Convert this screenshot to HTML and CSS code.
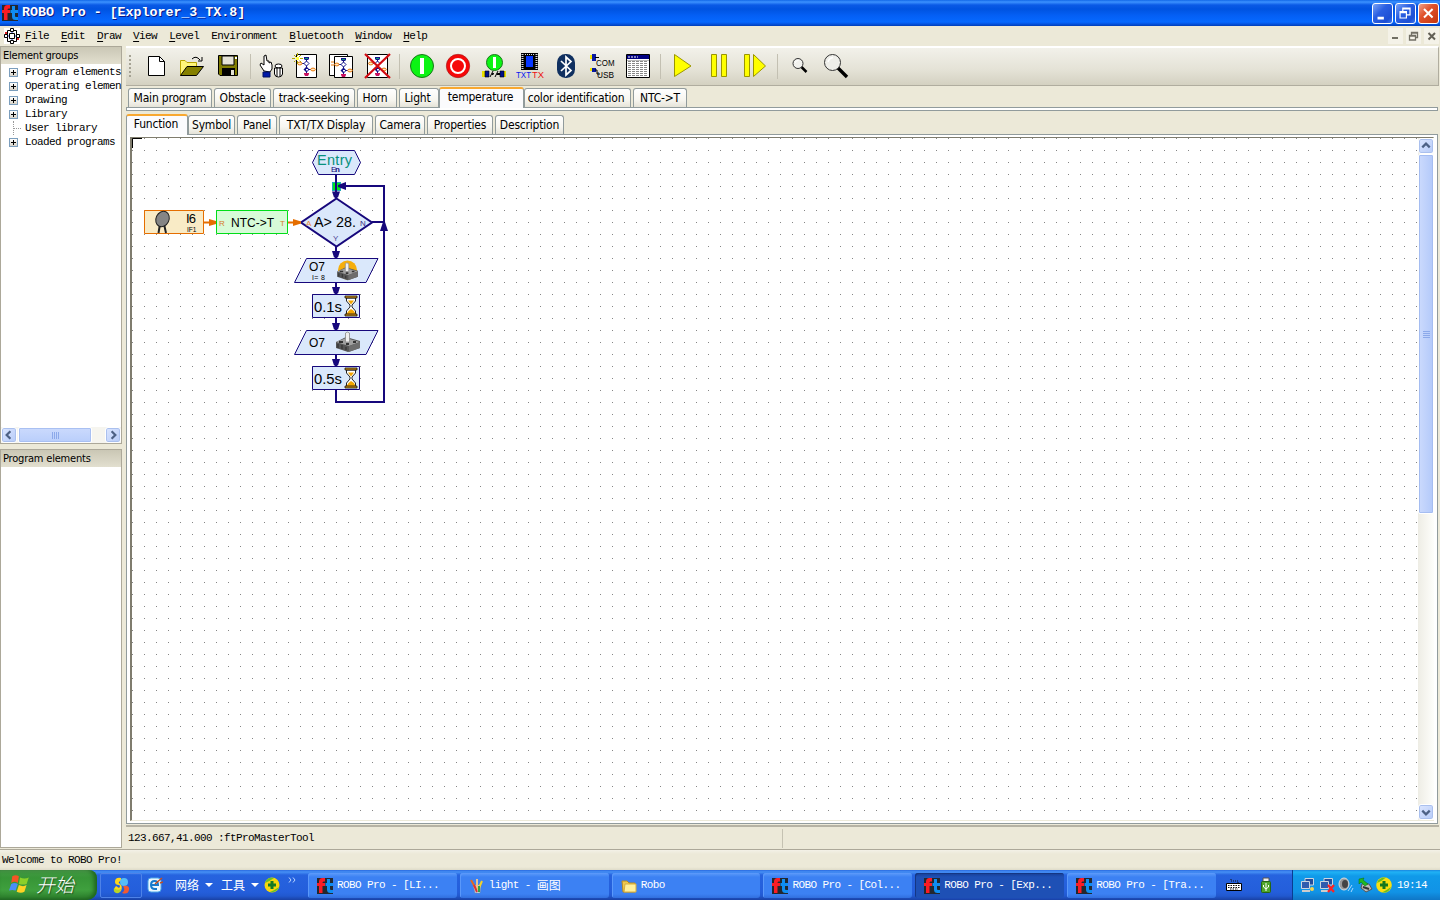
FILE: index.html
```html
<!DOCTYPE html>
<html lang="en">
<head>
<meta charset="utf-8">
<title>ROBO Pro - [Explorer_3_TX.8]</title>
<link rel="stylesheet" href="styles.css">
</head>
<body>
<svg class="defs" aria-hidden="true">
  <defs>
    <symbol id="ft" viewBox="0 0 16 16">
      <rect width="16" height="16" fill="#222830"/>
      <path d="M2 15V8H0V5H2V3.500Q2 0 5.500 0H8V3.500H6.500Q5.500 3.500 5.500 5H8V8H5.500V15Z" fill="#fb1c24"/>
      <path d="M10 1H13V5H16V8H13V11Q13 12 14 12H16V15H13.500Q10 15 10 11.500V8H8.500V5H10Z" fill="#0e8df2"/>
    </symbol>
    <symbol id="flow" viewBox="0 0 19 20">
      <path d="M9.500 2V18M4 7.500H8M11 13.500H15" stroke="#11118a" fill="none"/>
      <path d="M7 1H12V3L11 4H8L7 3Z" fill="#11118a"/><path d="M8 2H11V3H8Z" fill="#0aa070"/>
      <path d="M9.500 5L12 7.500L9.500 10L7 7.500Z" fill="#fff" stroke="#11118a"/>
      <path d="M9.500 10.500L12.500 13.500L9.500 16.500L6.500 13.500Z" fill="#11118a"/><path d="M9 13H11V14.500H9Z" fill="#fff"/>
      <ellipse cx="2.800" cy="7.500" rx="2.200" ry="1.400" fill="#ffe9c8" stroke="#e87808"/>
      <ellipse cx="16" cy="13.500" rx="2.300" ry="1.400" fill="#ffe9c8" stroke="#e87808"/>
      <path d="M7 17H12V18L11 20H8L7 18Z" fill="#c81060"/>
    </symbol>
    <symbol id="lamp" viewBox="0 0 26 22">
      <path d="M1 11L11 6L25 10V17L13 21L1 17Z" fill="#555"/>
      <path d="M1 11L11 7L25 11L14 15Z" fill="#a0a0a0"/>
      <path d="M14 15L25 11V17L14 21Z" fill="#6d6d6d"/>
      <path d="M3 13V17M7 14V18M11 16V19" stroke="#333" stroke-width="1.200"/>
      <path d="M4 10H8V12H4ZM18 10H21V12H18ZM11 12H14V14H11Z" fill="#333"/>
      <path d="M10.500 11V2Q12 0 14.500 2V11Z" fill="#eee" stroke="#888" stroke-width=".8"/>
    </symbol>
    <symbol id="glass" viewBox="0 0 14 22">
      <path d="M2.500 3V6L6 10V12L2.500 16V19H11.500V16L8 12V10L11.500 6V3Z" fill="#fff" stroke="#222"/>
      <path d="M4 5.500H10L7 9.500ZM2.500 19L4.500 16L7 14L10 16L11.500 19Z" fill="#f2a500"/>
      <path d="M1 1H13V3H1ZM1 19H13V21H1Z" fill="#d59210" stroke="#111" stroke-width=".8"/>
    </symbol>
  </defs>
</svg>

<div class="screen">
  <header class="titlebar">
    <svg class="title-icon"><use href="#ft"/></svg>
    <h1 class="title">ROBO Pro - [Explorer_3_TX.8]</h1>
    <div class="winbtns">
      <svg class="winbtn" viewBox="0 0 21 21"><path d="M5 14H12V17H5Z" fill="#fff"/></svg>
      <svg class="winbtn" viewBox="0 0 21 21"><path d="M7.500 8V4.500H15.500V12H12M7 5.500H16M4.500 8.500H11.500V15.500H4.500ZM4 9.500H12" fill="none" stroke="#fff" stroke-width="1.300"/></svg>
      <svg class="winbtn winbtn-close" viewBox="0 0 21 21"><path d="M5.500 5.500L15 15M15 5.500L5.500 15" stroke="#fff" stroke-width="2.200"/></svg>
    </div>
  </header>

  <nav class="menubar mono">
    <svg class="menu-icon" viewBox="0 0 16 16"><rect width="16" height="16" fill="#fff"/><path d="M8 3V13M3 8H13" stroke="#2030d0"/><path d="M3.500 4V2.500H12.500V13.500H3.500V4" fill="none" stroke="#000"/><path d="M6.500 .5H9.500V3.500H6.500ZM6.500 12.500H9.500V15.500H6.500ZM.5 6.500H3.500V9.500H.5ZM12.500 6.500H15.500V9.500H12.500ZM5.500 5.500H10.500V10.500H5.500Z" fill="#fff" stroke="#000"/><path d="M1 4H3V6H1ZM13 10H15V12H13Z" fill="#e02020"/></svg>
    <span><u>F</u>ile</span><span><u>E</u>dit</span><span><u>D</u>raw</span><span><u>V</u>iew</span><span><u>L</u>evel</span><span>En<u>v</u>ironment</span><span><u>B</u>luetooth</span><span><u>W</u>indow</span><span><u>H</u>elp</span>
    <div class="mdi">
      <svg viewBox="0 0 15 16"><path d="M4 9H10V11H4Z" fill="#716f64"/></svg>
      <svg viewBox="0 0 15 16"><path d="M5.500 7V4.500H11.500V9.500H9.500M5 5H12M3.500 7.500H9.500V12H3.500ZM3 8H10" fill="none" stroke="#716f64" stroke-width="1.300"/></svg>
      <svg viewBox="0 0 15 16"><path d="M4.500 5L11 11.500M11 5L4.500 11.500" stroke="#625f55" stroke-width="2"/></svg>
    </div>
  </nav>

  <div class="work">
    <aside class="side">
      <section class="panel groups">
        <h2 class="panel-head">Element groups</h2>
        <ul class="tree mono">
          <li><i class="plus"></i>Program elements</li>
          <li><i class="plus"></i>Operating elemen</li>
          <li><i class="plus"></i>Drawing</li>
          <li><i class="plus"></i>Library</li>
          <li><i class="leaf"></i>User library</li>
          <li><i class="plus"></i>Loaded programs</li>
        </ul>
        <div class="hscroll">
          <svg class="sbtn" viewBox="0 0 15 15"><path d="M9 3.500L5 7.500L9 11.500" fill="none" stroke="#4d6185" stroke-width="2.400"/></svg>
          <div class="hthumb"><i></i><i></i><i></i><i></i></div>
          <svg class="sbtn hright" viewBox="0 0 15 15"><path d="M6 3.500L10 7.500L6 11.500" fill="none" stroke="#4d6185" stroke-width="2.400"/></svg>
        </div>
      </section>
      <section class="panel elements"><h2 class="panel-head">Program elements</h2></section>
    </aside>

    <main class="main">
      <div class="toolbar">
        <div class="grip"></div>
        <svg class="tool" viewBox="138 48 36 36"><path d="M148.500 56.500H159.500L164.500 61.500V75.500H148.500Z" fill="#fff" stroke="#000"/><path d="M159.500 56.500V61.500H164.500" fill="none" stroke="#000"/></svg>
        <svg class="tool" viewBox="174 48 36 36"><path d="M180.500 75.500V60.500H185L187 62.500H196.500V67" fill="#fff67a" stroke="#b9a400"/><path d="M180.500 75.500L187 66.500H203.500L196.500 75.500Z" fill="#858000" stroke="#000"/><path d="M192 59Q196 55 200 60M202 57V61H198" fill="none" stroke="#000"/></svg>
        <svg class="tool" viewBox="210 48 36 36"><path d="M218.500 55.500H237.500V75.500H220L218.500 74Z" fill="#807c00" stroke="#000"/><path d="M222 56H234V65H222Z" fill="#e4e2d5" stroke="#000"/><path d="M222 68H235V76H222Z" fill="#000"/><path d="M231 70H234V75H231Z" fill="#e4e2d5"/><path d="M235 57H237V59H235Z" fill="#fff"/></svg>
        <i class="sep sep-first"></i>
        <svg class="tool" viewBox="251 48 36 36"><path d="M264 71L260 65L261 63L264 65V56L266 55L267 61L269 61V63L271 62L272 65V69L270 72Z" fill="#fff" stroke="#000"/><path d="M263 72H270V77H263Z" fill="#0019a8" stroke="#001060"/><ellipse cx="278.500" cy="66" rx="3.500" ry="2" fill="#fff" stroke="#000"/><path d="M274.500 68H282.500V74Q282 77 278.500 77T274.500 74ZM277 68V76M280 68V76" fill="#fff" stroke="#000"/></svg>
        <svg class="tool" viewBox="287 48 36 36"><path d="M296.500 54.500H316.500V77.500H296.500Z" fill="#fff" stroke="#000"/><use href="#flow" x="297" y="56" width="19" height="20"/><path d="M294 55L301 62M301 55L294 62M297.500 53V64M292 58.500H303" stroke="#b4a800" stroke-dasharray="3 1"/><path d="M296 57H299V60H296Z" fill="#ff4"/></svg>
        <svg class="tool" viewBox="323 48 36 36"><path d="M329.500 54.500H347.500V75.500H329.500Z" fill="#fff" stroke="#000"/><path d="M331 62H335M331 65H334" stroke="#e87808"/><path d="M334.500 56.500H352.500V77.500H334.500Z" fill="#fff" stroke="#000"/><use href="#flow" x="334" y="57" width="19" height="20"/></svg>
        <svg class="tool" viewBox="359 48 36 36"><path d="M367.500 54.500H387.500V77.500H367.500Z" fill="#fff" stroke="#000"/><use href="#flow" x="368" y="56" width="19" height="20"/><path d="M365 54L390 78M390 54L365 78" stroke="#d30b12" stroke-width="2.200"/></svg>
        <i class="sep"></i>
        <svg class="tool" viewBox="404 48 36 36"><circle cx="422" cy="66" r="11.500" fill="#0cf414" stroke="#187818"/><path d="M420 58H424V74H420Z" fill="#fff"/></svg>
        <svg class="tool" viewBox="440 48 36 36"><circle cx="458" cy="66" r="11.700" fill="#f60808" stroke="#9c1616" stroke-width=".6"/><circle cx="458" cy="66" r="7" fill="#f60808" stroke="#fff" stroke-width="2"/></svg>
        <svg class="tool" viewBox="476 48 36 36"><path d="M484 74H504" stroke="#000" stroke-width="2"/><path d="M492 70L489 77M497 70L494 77" stroke="#e4e2d6" stroke-width="3"/><path d="M490 77L493 71M495 77L498 71" stroke="#000"/><path d="M482 71H486V77H482ZM503 71H506V77H503Z" fill="#e8df00"/><path d="M485 71H489V77H485ZM500 71H504V77H500Z" fill="#00108c" stroke="#000" stroke-width=".6"/><circle cx="494.500" cy="62.500" r="8" fill="#0cf414" stroke="#187818"/><path d="M493 57H496V68H493Z" fill="#fff"/></svg>
        <svg class="tool" viewBox="512 48 36 36"><path d="M521 53H538V70H521Z" fill="#000"/><path d="M522.500 54V70M536.500 54V70" stroke="#ddd" stroke-width="2" stroke-dasharray="1 1"/><path d="M525 54.500H535" stroke="#ddd" stroke-dasharray="1 1"/><path d="M526 56H533V67H526Z" fill="#0636ff"/><text x="516" y="78" font-size="9.500" textLength="15" lengthAdjust="spacingAndGlyphs" fill="#0818ef">TXT</text><text x="532" y="78" font-size="9.500" textLength="12" lengthAdjust="spacingAndGlyphs" fill="#ed1111">TX</text></svg>
        <svg class="tool" viewBox="548 48 36 36"><rect x="557" y="54" width="18" height="24" rx="8.500" fill="#103060"/><path d="M561 61L571 70.500L566 75V57L571 61.500L561 71" fill="none" stroke="#fff" stroke-width="1.700"/></svg>
        <svg class="tool" viewBox="584 48 36 36"><path d="M590 55H593V59H590ZM590 68H593V71H590Z" fill="#f3e600"/><path d="M592 54H596V61H592ZM592 68H596V72H592Z" fill="#0818a0"/><path d="M595 57.500H599M595 70H597V74H600" fill="none" stroke="#000"/><text x="596" y="66" font-size="9.500" textLength="18.500" lengthAdjust="spacingAndGlyphs">COM</text><text x="597" y="78" font-size="9.500" textLength="17" lengthAdjust="spacingAndGlyphs">USB</text></svg>
        <svg class="tool" viewBox="620 48 36 36"><path d="M626.500 54.500H649.500V77.500H626.500Z" fill="#fff" stroke="#000"/><path d="M627 55H649V59H627Z" fill="#000080"/><path d="M628 57H638" stroke="#fff" stroke-dasharray="2 1"/><path d="M629.500 61V77M633.500 61V77M637.500 61V77M641.500 61V77M645.500 61V77" stroke="#888" stroke-width="3" stroke-dasharray="1 1"/><path d="M627 60.500H649" stroke="#bbb"/></svg>
        <i class="sep"></i>
        <svg class="tool" viewBox="665 48 36 36"><path d="M674.500 54.500L691 66L674.500 76.500Z" fill="#ff0" stroke="#9b9600"/></svg>
        <svg class="tool" viewBox="701 48 36 36"><path d="M711.500 54.500H716.500V76.500H711.500ZM721.500 54.500H726.500V76.500H721.500Z" fill="#ff0" stroke="#9b9600"/></svg>
        <svg class="tool" viewBox="737 48 36 36"><path d="M744.500 54.500H749.500V76.500H744.500ZM753.500 54.500L765.500 66L753.500 76.500Z" fill="#ff0" stroke="#9b9600"/></svg>
        <i class="sep"></i>
        <svg class="tool" viewBox="782 48 36 36"><path d="M801.500 67L806.500 72" stroke="#000" stroke-width="2.500"/><circle cx="798" cy="63.500" r="5" fill="#f2f2ee" stroke="#333"/><path d="M795 63Q795.500 60.500 798.500 60.500" fill="none" stroke="#fff"/></svg>
        <svg class="tool" viewBox="818 48 36 36"><path d="M838 68L847 77" stroke="#000" stroke-width="3.400"/><circle cx="832.500" cy="62.500" r="8" fill="#efefea" stroke="#333"/><path d="M828 62Q829 58 833 57.500" fill="none" stroke="#fff" stroke-width="1.500"/></svg>
      </div>

      <div class="tabs tabs-top">
        <span class="tab t-main">Main program</span><span class="tab t-obst">Obstacle</span><span class="tab t-track">track-seeking</span><span class="tab t-horn">Horn</span><span class="tab t-light">Light</span><span class="tab t-temp active">temperature</span><span class="tab t-color">color identification</span><span class="tab t-ntc">NTC-&gt;T</span>
      </div>
      <div class="tabline"></div>
      <div class="tabs tabs-sub">
        <span class="tab t-func active">Function</span><span class="tab t-sym">Symbol</span><span class="tab t-panel">Panel</span><span class="tab t-txt">TXT/TX Display</span><span class="tab t-cam">Camera</span><span class="tab t-prop">Properties</span><span class="tab t-desc">Description</span>
      </div>

      <div class="page">
        <div class="view">
          <svg class="canvas" viewBox="132 138 1286 682">
            <defs>
              <pattern id="dots" x="132" y="138" width="12" height="12" patternUnits="userSpaceOnUse"><rect width="1" height="1" fill="#858585"/></pattern>
            </defs>
            <rect x="132" y="138" width="1286" height="682" fill="#fff"/>
            <rect x="132" y="138" width="1286" height="682" fill="url(#dots)"/>
            <path d="M132.500 148V138.500H142" fill="none" stroke="#000"/>
            <g fill="none" stroke="#17087c" stroke-width="2">
              <path d="M336 174V198M372 222H384M336 246V258M336 282V294M336 318V330M336 354V366M336 390V402H384V186H342"/>
            </g>
            <rect x="332.500" y="182.500" width="8" height="8" fill="#00e81c" stroke="#20a8b8"/>
            <path d="M336 182V192" stroke="#17087c" stroke-width="2"/>
            <g fill="#17087c">
              <path d="M332 191.500H340L338 197.500H334ZM332 251H340L338 257.500H334ZM332 287H340L338 293.500H334ZM332 323H340L338 329.500H334ZM332 359H340L338 365.500H334ZM346 182V190L338 187V185ZM380 231H388L385 222H383Z"/>
            </g>
            <path d="M318.500 150.500H354.500L360.500 162.500L354.500 174.500H318.500L312.500 162.500Z" fill="#dae8fb" stroke="#17087c"/>
            <text x="317" y="164.500" font-size="14.500" textLength="35" fill="#07917e">Entry</text>
            <text x="331" y="172" font-size="8" textLength="9" fill="#17087c">E<tspan font-weight="bold">n</tspan></text>
            <path d="M336.500 198.500L372 222.500L336.500 246.500L301 222.500Z" fill="#dae8fb" stroke="#17087c" stroke-width="2"/>
            <text x="314" y="227" font-size="14" textLength="42" lengthAdjust="spacingAndGlyphs">A&gt; 28.</text>
            <text x="360" y="226" font-size="8" fill="#3c307f">N</text>
            <text x="333" y="241" font-size="8" fill="#4b4495">Y</text>
            <text x="306" y="226" font-size="8" fill="#e8893a">A</text>
            <path d="M204 222.500H216M288 222.500H300" stroke="#e56e00" stroke-width="2"/>
            <path d="M209 219L216 221V224L209 226ZM293 219L301 221.500V223.500L293 226Z" fill="#e56e00"/>
            <path d="M144.500 210.500H203.500V233.500H144.500Z" fill="#f9ebc6" stroke="#e56e00"/>
            <path d="M160 224L158.500 233M164 224L166 233" fill="none" stroke="#222" stroke-width="2"/>
            <ellipse cx="162.500" cy="219" rx="6.500" ry="8" transform="rotate(25 162.500 219)" fill="#858585" stroke="#222"/>
            <text x="186" y="223" font-size="13" textLength="10">I6</text><text x="187" y="232" font-size="7.500" textLength="9.500" lengthAdjust="spacingAndGlyphs">IF1</text>
            <path d="M216.500 210.500H287.500V233.500H216.500Z" fill="#d7fbd8" stroke="#00de18"/>
            <text x="219" y="226" font-size="8" fill="#d87a28">R</text>
            <text x="231" y="227" font-size="12" textLength="43" lengthAdjust="spacingAndGlyphs">NTC-&gt;T</text>
            <text x="280" y="226" font-size="8" fill="#d87a28">T</text>
            <path d="M306.500 258.500H378L366 282.500H294.500ZM306.500 330.500H378L366 354.500H294.500ZM312.500 294.500H359.500V317.500H312.500ZM312.500 366.500H359.500V389.500H312.500Z" fill="#dae8fb" stroke="#17087c"/>
            <text x="309" y="271" font-size="12.500" textLength="16" lengthAdjust="spacingAndGlyphs">O7</text><text x="312" y="280" font-size="7" textLength="13">I= 8</text>
            <circle cx="347.500" cy="270" r="9.500" fill="#f5ae0c"/><use href="#lamp" x="336" y="262" width="23" height="19"/>
            <text x="314" y="312" font-size="14" textLength="28" lengthAdjust="spacingAndGlyphs">0.1s</text><use href="#glass" x="344" y="295" width="14" height="22"/>
            <text x="309" y="347" font-size="12.500" textLength="16" lengthAdjust="spacingAndGlyphs">O7</text><use href="#lamp" x="335" y="331" width="26" height="22"/>
            <text x="314" y="384" font-size="14" textLength="28" lengthAdjust="spacingAndGlyphs">0.5s</text><use href="#glass" x="344" y="367" width="14" height="22"/>
          </svg>
          <div class="vscroll">
            <svg class="sbtn" viewBox="0 0 15 15"><path d="M3.500 9L7.500 5L11.500 9" fill="none" stroke="#4d6185" stroke-width="2.400"/></svg>
            <div class="vthumb"><i></i><i></i><i></i><i></i></div>
            <svg class="sbtn vdown" viewBox="0 0 15 15"><path d="M3.500 6L7.500 10L11.500 6" fill="none" stroke="#4d6185" stroke-width="2.400"/></svg>
          </div>
        </div>
      </div>
      <div class="docstatus mono"><span class="coords">123.667,41.000 :ftProMasterTool</span></div>
    </main>
  </div>

  <div class="appstatus mono">Welcome to ROBO Pro!</div>

  <footer class="taskbar">
    <div class="start">
      <svg class="flag" viewBox="0 0 20 18"><path d="M3 2Q6 0 9 2L8 8Q5 6 2 8Z" fill="#f45525"/><path d="M10 3Q14 5 18 3L16 9Q13 10 9 9Z" fill="#8bd02a"/><path d="M2 9Q5 7 8 9L6 15Q3 14 0 15Z" fill="#4b8ef8"/><path d="M9 10Q13 12 16 10L14 16Q11 18 7 16Z" fill="#ffd324"/></svg>
      <span class="start-text">开始</span>
    </div>
    <div class="quick"><svg class="ico18" viewBox="0 0 18 18"><path d="M9 1Q3 0 3 5Q3 8 7 8Q9 9 7 11L4 9Q1 12 3 14Q6 17 9 14Q11 9 8 7Q5 5 9 4Z" fill="#ffd61c"/><circle cx="12" cy="5" r="4" fill="#55bdf7"/><path d="M11 9Q18 8 17 13Q16 18 10 16Q14 13 11 9Z" fill="#f15a31"/><path d="M2 11Q5 14 9 12Q8 17 4 16Q1 15 2 11Z" fill="#b9d426"/></svg></div>
    <div class="links">
      <svg class="ico16" viewBox="0 0 16 16"><rect x="1" y="1" width="13" height="14" rx="3" fill="#e9f7ff" stroke="#50a7e6"/><path d="M4 8H11Q11 4 7.500 4T4 8Q4 12 8 12H10" fill="none" stroke="#1479cc" stroke-width="2"/><path d="M8 7L15 1M13 6L16 5" stroke="#c44d20" stroke-width="1.500"/></svg>
      <span class="link">网络</span><i class="caret"></i><span class="link">工具</span><i class="caret"></i>
      <svg class="ico16 plus360" viewBox="0 0 16 16"><circle cx="8" cy="8" r="7.500" fill="#f7d70b"/><path d="M1 6Q3 0 10 1Q6 4 1 6M15 10Q13 16 6 15Q11 13 15 10" fill="#67bf26"/><path d="M6.500 4H9.500V6.500H12V9.500H9.500V12H6.500V9.500H4V6.500H6.500Z" fill="#177a22"/></svg>
      <svg class="chev" viewBox="0 0 8 6"><path d="M1 .5L3 3L1 5.500M5 .5L7 3L5 5.500" fill="none" stroke="#b9d4ff"/></svg>
    </div>
    <div class="tasks mono">
      <div class="task"><svg><use href="#ft"/></svg><span>ROBO Pro - [LI...</span></div>
      <div class="task"><svg viewBox="0 0 16 16"><path d="M4 7H12L11 15H6Z" fill="#cce3ee" stroke="#708098" stroke-width=".5"/><path d="M6 9L2 2" stroke="#e26a20" stroke-width="2"/><path d="M8 11V1" stroke="#e8c390" stroke-width="2"/><path d="M9 12L13 3" stroke="#f3d32a" stroke-width="2"/><path d="M5 7L8 14" stroke="#d33" stroke-width="2"/><path d="M10 8V14" stroke="#35a04a" stroke-width="2"/></svg><span>light - </span><b class="cjk">画图</b></div>
      <div class="task"><svg viewBox="0 0 16 16"><path d="M1 3H6L8 5H14V14H2Z" fill="#efc84e" stroke="#b88b21"/><path d="M4 6H15V14H3Z" fill="#fff09c" stroke="#d5ad3f"/></svg><span>Robo</span></div>
      <div class="task"><svg><use href="#ft"/></svg><span>ROBO Pro - [Col...</span></div>
      <div class="task pressed"><svg><use href="#ft"/></svg><span>ROBO Pro - [Exp...</span></div>
      <div class="task"><svg><use href="#ft"/></svg><span>ROBO Pro - [Tra...</span></div>
    </div>
    <div class="lang">
      <svg class="ico16" viewBox="0 0 16 16"><path d="M.5 6.500H15.500V13.500H.5Z" fill="#fff" stroke="#000"/><path d="M2 8.500H14M2 10.500H14M4 12H12" stroke="#111" stroke-dasharray="1.500 1"/><path d="M12 6V4H5V2" fill="none" stroke="#111" stroke-dasharray="1 1"/></svg>
      <svg class="ico16 usb" viewBox="0 0 16 16"><path d="M5 1H11V5H5Z" fill="#eee" stroke="#555"/><rect x="3.500" y="4.500" width="9" height="11" rx="1" fill="#4fa52b" stroke="#256614"/><path d="M8 6V14M5.500 8V10L8 12L10.500 10V8" fill="none" stroke="#fff"/></svg>
    </div>
    <div class="tray mono">
      <svg class="t16" viewBox="0 0 16 16"><path d="M5 1.500H13.500V8H5Z" fill="#244c9b" stroke="#cbd5df"/><path d="M1.500 4.500H9.500V11.500H1.500Z" fill="#2f5cae" stroke="#cbd5df"/><path d="M2 13H10V15H2Z" fill="#ccc"/><circle cx="12" cy="12" r="2" fill="#f4d252"/></svg>
      <svg class="t16" viewBox="0 0 16 16"><path d="M5 1.500H13.500V8H5Z" fill="#244c9b" stroke="#cbd5df"/><path d="M1.500 4.500H9.500V11.500H1.500Z" fill="#2f5cae" stroke="#cbd5df"/><path d="M2 13H9V15H2Z" fill="#ccc"/><path d="M9 8L15 15M15 8L9 15" stroke="#f22" stroke-width="2.200"/></svg>
      <svg class="t16" viewBox="0 0 16 16"><ellipse cx="6" cy="7" rx="5" ry="6" fill="#999" stroke="#ddd"/><ellipse cx="7" cy="7" rx="3" ry="4" fill="#444"/><path d="M10 14L14 8M13 15L15 11" stroke="#a8d8ff"/></svg>
      <svg class="t16" viewBox="0 0 16 16"><path d="M5 7L12 7L15 12L9 15L4 11Z" fill="#bbb" stroke="#555"/><path d="M6 10L12 12" stroke="#333" stroke-width="2"/><path d="M2 2L7 1L6 3L11 7L8 9L4 5L2 7Z" fill="#22b822" stroke="#087008" stroke-width=".5"/></svg>
      <svg class="t16" viewBox="0 0 16 16"><circle cx="8" cy="8" r="7.800" fill="#f9df11"/><path d="M1 6Q3 0 10 .5Q6 4 1 6M15 10Q13 16 6 15.500Q11 13 15 10" fill="#68bd24"/><path d="M6.500 4H9.500V6.500H12V9.500H9.500V12H6.500V9.500H4V6.500H6.500Z" fill="#15781e"/></svg>
      <span class="clock">19:14</span>
    </div>
  </footer>
</div>
</body>
</html>
```
FILE: styles.css
```css
* { box-sizing: border-box; }
body { margin: 0; font-family: "DejaVu Sans Condensed", "DejaVu Sans", sans-serif; font-size: 11px; color: #000; background: #ece9d8; }
h1, h2, ul { margin: 0; padding: 0; font-weight: normal; }
svg { display: block; flex: none; }
svg text { font-family: "Liberation Sans", sans-serif; }
.defs { position: absolute; width: 0; height: 0; }
.mono { font-family: "Liberation Mono", "Noto Sans CJK SC", monospace; font-size: 11px; letter-spacing: -0.6px; white-space: nowrap; }
.screen { width: 1440px; height: 900px; display: flex; flex-direction: column; overflow: hidden; background: #ece9d8; }

.titlebar { height: 26px; flex: none; display: flex; align-items: center; padding: 0 1px 0 2px; background: linear-gradient(#1268e8 0, #3c92ff 2px, #0a5ae6 5px, #0053e0 9px, #0460f6 16px, #0669ff 22px, #0554e0 24px, #003db8 26px); }
.title-icon { width: 16px; height: 16px; margin-right: 4px; }
.title { font: bold 13.33px/24px "Liberation Mono", monospace; letter-spacing: -0.03px; color: #fff; text-shadow: 1px 1px 0 #0a1883; white-space: pre; }
.winbtns { margin-left: auto; display: flex; gap: 2px; }
.winbtn { width: 21px; height: 21px; border: 1px solid #fff; border-radius: 3px; background: linear-gradient(135deg, #7ba3f5, #2a5fe2 40%, #1d4fd4 80%, #3d79f0); }
.winbtn-close { background: linear-gradient(135deg, #f0a088, #e0522c 40%, #c93a12 90%); }

.menubar { height: 20px; flex: none; display: flex; align-items: center; gap: 12px; padding: 0 1px 0 4px; background: #ece9d8; }
.menu-icon { width: 16px; height: 16px; margin-right: -7px; }
.menubar u { text-underline-offset: 2px; }
.mdi { margin-left: auto; display: flex; gap: 3px; }
.mdi svg { width: 15px; height: 16px; background: #f4f2e8; }

.work { height: 803px; flex: none; display: flex; gap: 4px; }
.side { width: 122px; flex: none; display: flex; flex-direction: column; gap: 5px; }
.panel { border: 1px solid #aca899; background: #fff; display: flex; flex-direction: column; }
.groups { height: 398px; }
.elements { height: 399px; }
.panel-head { height: 17px; flex: none; padding-left: 2px; font-size: 11px; line-height: 17px; letter-spacing: -0.2px; background: linear-gradient(#cac7b5, #e2dfcf); white-space: nowrap; }
.tree { list-style: none; flex: 1; padding-top: 1px; }
.tree li { height: 14px; line-height: 14px; display: flex; align-items: center; padding-left: 8px; }
.plus { width: 9px; height: 9px; flex: none; margin-right: 7px; border: 1px solid #7b9ebd; background: linear-gradient(#000, #000) center / 5px 1px no-repeat, linear-gradient(#000, #000) center / 1px 5px no-repeat, linear-gradient(#fff, #d8d3c8); }
.leaf { width: 8px; height: 14px; flex: none; margin: 0 4px; border-left: 1px dotted #999; background: linear-gradient(90deg, #999 50%, transparent 50%) 0 7px / 2px 1px repeat-x; }
.hscroll { height: 16px; flex: none; display: flex; background: #f6f5ef; }
.sbtn { width: 16px; height: 16px; border: 1px solid #fff; border-radius: 3px; background: linear-gradient(135deg, #dce6ff, #b6cbf8); box-shadow: inset 0 0 0 1px #aac0ee; }
.hthumb { width: 74px; margin-left: 1px; border: 1px solid #fff; border-radius: 2px; background: linear-gradient(#cbdafd, #b9cefb); box-shadow: inset 0 0 0 1px #a9c0f2; display: flex; gap: 1px; justify-content: center; align-items: center; }
.hthumb i { width: 1px; height: 7px; background: #8ca9ea; }
.hright { margin-left: auto; }

.main { width: 1314px; flex: none; display: flex; flex-direction: column; padding-right: 1px; }
.toolbar { height: 40px; flex: none; display: flex; align-items: flex-start; border-top: 2px solid #fff; border-bottom: 1px solid #b0ad9f; border-right: 1px solid #b0ad9f; background: linear-gradient(#f2f1ea, #e4e2d6 60%, #d4d1c1); }
.grip { width: 12px; height: 24px; margin-top: 6px; background: radial-gradient(circle, #a5a293 1px, transparent 1.3px) 2px 0 / 4px 4px repeat-y; }
.tool { width: 36px; height: 36px; }
.sep { width: 9px; height: 25px; flex: none; margin-top: 6px; background: linear-gradient(#c3c0b2, #c3c0b2) 4px 0 / 1px 100% no-repeat; }
.sep-first { width: 5px; }

.tabs { display: flex; align-items: flex-end; gap: 2px; flex: none; font-size: 12px; white-space: nowrap; }
.tab { height: 19px; border: 1px solid #919b9c; border-bottom: 0; border-radius: 3px 3px 0 0; background: linear-gradient(#fff, #f7f6f0 60%, #e5e3d8); text-align: center; line-height: 19px; letter-spacing: -0.2px; }
.tab.active { height: 21px; border-top: 2px solid #f8a830; background: #fbfbfd; line-height: 16px; margin: 0 -1px -1px -2px; padding-right: 2px; position: relative; }
.tabs-top { height: 21px; padding-left: 2px; }
.t-main { width: 84px; } .t-obst { width: 57px; } .t-track { width: 82px; } .t-horn { width: 40px; padding-right: 4px; } .t-light { width: 40px; padding-right: 3px; }
.t-temp.active { width: 85px; } .t-color { width: 107px; margin-left: -1px; padding-right: 3px; } .t-ntc { width: 54px; }
.tabline { height: 4px; flex: none; margin-right: 1px; background: #fff; border: 1px solid #919b9c; }
.tabs-sub { height: 23px; }
.t-func.active { width: 62px; margin-left: 0; } .t-sym { width: 47px; margin-left: -1px; } .t-panel { width: 40px; } .t-txt { width: 94px; } .t-cam { width: 50px; } .t-prop { width: 66px; } .t-desc { width: 69px; }

.page { height: 690px; flex: none; margin-right: 1px; padding: 2px 3px; background: #fff; border: 1px solid #919b9c; }
.view { height: 684px; display: flex; border-top: 1px solid #7f7c6e; border-left: 2px solid #7f7c6e; border-right: 1px solid #ece9d8; border-bottom: 1px solid #ece9d8; }
.canvas { width: 1286px; height: 682px; }
.vscroll { width: 16px; display: flex; flex-direction: column; background: linear-gradient(90deg, #eeede5, #fefefb); }
.vthumb { height: 360px; border: 1px solid #fff; border-radius: 2px; background: linear-gradient(90deg, #cbdafd, #b3c9fa); box-shadow: inset 0 0 0 1px #a5bdf1; display: flex; flex-direction: column; gap: 1px; justify-content: center; align-items: center; }
.vthumb i { width: 7px; height: 1px; background: #8ca9ea; }
.vdown { margin-top: auto; }
.docstatus { height: 25px; flex: none; margin-top: 1px; display: flex; align-items: center; border-top: 2px solid #b6b3a4; background: #ece9d8; }
.coords { width: 657px; height: 19px; padding-left: 2px; line-height: 18px; border-right: 1px solid #c5c2b2; }
.appstatus { height: 21px; flex: none; padding-left: 2px; line-height: 21px; border-top: 1px solid #aca899; background: linear-gradient(#f3f1e7, #ece9d8 4px, #ece9d8 17px, #dedbc9); }

.taskbar { height: 30px; flex: none; display: flex; background: linear-gradient(#2a6ae0 0, #4690f5 2px, #2663df 5px, #245edb 22px, #2158cf 26px, #1941a5); color: #fff; }
.start { width: 97px; display: flex; align-items: center; padding-left: 9px; border-radius: 0 8px 10px 0; background: linear-gradient(#5aa85a 0, #409840 3px, #379537 8px, #3fa03e 20px, #2f832f 27px, #236b26); box-shadow: inset -3px 0 4px #1e641e; }
.flag { width: 22px; height: 20px; margin-top: -2px; }
.start-text { margin: -3px 0 0 5px; font: italic 300 19px/26px "Noto Sans CJK SC", sans-serif; text-shadow: 1px 1px 1px #1f4e1f; }
.quick { width: 42px; height: 25px; margin: 3px 0 0 3px; display: flex; align-items: center; justify-content: center; border: 1px solid #4e82e8; border-radius: 2px; }
.ico18 { width: 18px; height: 18px; }
.ico16 { width: 16px; height: 16px; }
.links { width: 166px; display: flex; align-items: center; padding-left: 5px; font: 12px "Noto Sans CJK SC", sans-serif; }
.link { width: 24px; margin: -2px 0 0 12px; white-space: nowrap; }
.caret + .link { margin-left: 8px; }
.caret { margin-left: 6px; border: 4px solid transparent; border-top-color: #fff; border-bottom: 0; }
.plus360 { margin-left: 5px; }
.chev { width: 8px; height: 6px; margin: -10px 0 0 8px; }
.tasks { width: 908px; flex: none; display: flex; gap: 3px; padding-top: 3px; }
.task { flex: 1 1 0; height: 25px; display: flex; align-items: center; padding-left: 9px; border-radius: 3px; background: linear-gradient(#5c9bfa, #3c81f3 4px, #3c81f3 21px, #316fdd); box-shadow: inset 1px 1px 0 #5a98fa; white-space: pre; overflow: hidden; }
.task span { margin-top: -2px; }
.task svg { width: 16px; height: 16px; margin-right: 4px; }
.pressed { background: linear-gradient(#173d94, #1e50b5 4px, #1e50b5); box-shadow: inset 1px 1px 0 #153683; }
.cjk { margin-top: -3px; font: 12px "Noto Sans CJK SC", sans-serif; letter-spacing: 0; }
.lang { width: 76px; flex: none; display: flex; align-items: center; padding-left: 10px; gap: 16px; }
.tray { flex: 1; display: flex; align-items: center; padding-left: 7px; gap: 3px; border-left: 1px solid #0a3d91; background: linear-gradient(#1a86e0 0, #20b2f5 2px, #109ae9 6px, #1193e6 22px, #0f76c6); }
.t16 { width: 16px; height: 16px; }
.clock { margin-left: 2px; }
```
